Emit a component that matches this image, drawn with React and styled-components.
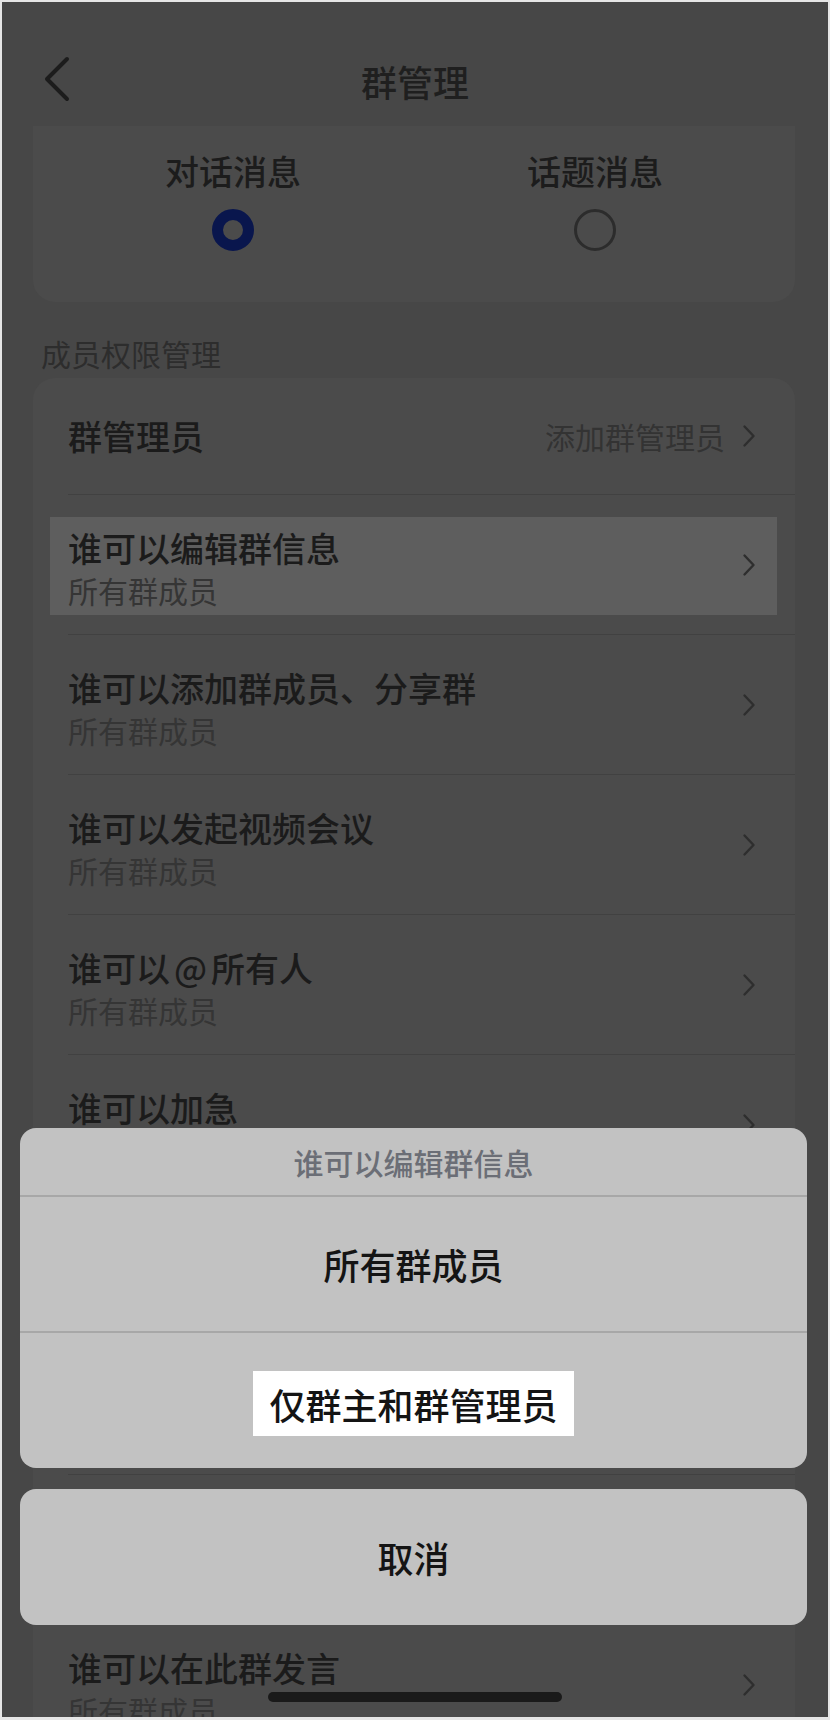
import React from 'react';
import styled, { createGlobalStyle } from 'styled-components';

const GlobalStyle = createGlobalStyle`
  html, body { margin: 0; padding: 0; }
  body {
    font-family: "Noto Sans CJK SC", "Noto Sans", sans-serif;
    background: #e6e6e6;
  }
  * { box-sizing: border-box; }
`;

const Screen = styled.div`
  position: relative;
  width: 830px;
  height: 1720px;
  overflow: hidden;
  border: 2px solid #e6e6e6;
  border-bottom-width: 3px;
  background: #474747;
`;

const Header = styled.div`
  display: grid;
  grid-template-columns: 1fr auto 1fr;
  align-items: center;
  height: 124px;
  padding-top: 34px;
`;

const BackBtn = styled.div`
  display: flex;
  align-items: center;
  padding-left: 42px;
  height: 46px;
  margin-top: -4px;
`;

const Title = styled.div`
  font-size: 36px;
  line-height: 44px;
  font-weight: 500;
  color: #1f1f1f;
`;

const ModeCard = styled.div`
  display: grid;
  grid-template-columns: 1fr 1fr;
  margin: 0 33px 0 31px;
  padding: 28px 19px 0;
  height: 176px;
  background: #4b4b4b;
  border-radius: 0 0 22px 22px;
`;

const ModeItem = styled.div`
  display: flex;
  flex-direction: column;
  align-items: center;
  gap: 21px;
`;

const ModeLabel = styled.div`
  font-size: 34px;
  line-height: 34px;
  font-weight: 500;
  color: #1c1c1c;
`;

const Radio = styled.div`
  width: 42px;
  height: 42px;
  border-radius: 50%;
  border: ${p => (p.$on ? '11px solid #09164d' : '3px solid #2c2c2c')};
`;

const SectionLabel = styled.div`
  margin: 34px 0 8px;
  padding-left: 39px;
  font-size: 30px;
  line-height: 34px;
  color: #2d2d2d;
`;

const Card = styled.div`
  margin: 0 33px 0 31px;
  background: #4b4b4b;
  border-radius: 22px;
`;

const Row = styled.div`
  position: relative;
  display: flex;
  align-items: ${p => (p.$single ? 'center' : 'flex-start')};
  height: ${p => (p.$single ? '116px' : '139px')};
  padding: ${p => (p.$single ? '0 39px 0 35px' : '32px 39px 0 35px')};

  &::before {
    content: '';
    display: ${p => (p.$active ? 'block' : 'none')};
    position: absolute;
    left: 17px;
    right: 18px;
    top: 22px;
    bottom: 19px;
    background: #5e5e5e;
  }
`;

const RowText = styled.div`
  position: relative;
  flex: 1;
  display: flex;
  flex-direction: column;
`;

const RowTitle = styled.div`
  font-size: 34px;
  line-height: 42px;
  font-weight: 500;
  color: #1b1b1b;
  white-space: nowrap;
`;

const At = styled.span`
  margin: 0 4px;
`;

const RowSub = styled.div`
  font-size: 30px;
  line-height: 42px;
  color: #353535;
`;

const RowRight = styled.div`
  position: relative;
  display: flex;
  align-items: center;
  gap: 17px;
  align-self: center;
  margin-top: ${p => (p.$offset ? '-32px' : '0')};
  font-size: 30px;
  color: #333333;
`;

const Divider = styled.div`
  height: 1px;
  margin-left: 35px;
  background: #414141;
`;

const Layer = styled.div`
  position: absolute;
  left: 18px;
  right: 21px;
  top: 1126px;
  display: flex;
  flex-direction: column;
  gap: 21px;
`;

const Sheet = styled.div`
  background: #c2c2c2;
  border-radius: 16px;
  overflow: hidden;
`;

const SheetTitle = styled.div`
  display: flex;
  align-items: center;
  justify-content: center;
  height: 69px;
  font-size: 30px;
  font-weight: 500;
  color: #6b6e76;
  border-bottom: 2px solid #a7a7a7;
`;

const SheetOption = styled.div`
  display: flex;
  align-items: center;
  justify-content: center;
  height: ${p => (p.$last ? '135px' : '136px')};
  border-bottom: ${p => (p.$last ? 'none' : '2px solid #a7a7a7')};
  font-size: 36px;
  font-weight: 500;
  color: #141414;
`;

const Mark = styled.span`
  display: inline-flex;
  align-items: center;
  height: 65px;
  padding: 0 16px;
  margin-top: 6px;
  background: #ffffff;
`;

const Cancel = styled.div`
  display: flex;
  align-items: center;
  justify-content: center;
  height: 136px;
  background: #c2c2c2;
  border-radius: 16px;
  font-size: 36px;
  font-weight: 500;
  color: #141414;
`;

const HomeBar = styled.div`
  position: absolute;
  left: 266px;
  top: 1690px;
  width: 294px;
  height: 10px;
  border-radius: 5px;
  background: #1a1a1a;
`;

const Chevron = () => (
  <svg width="14" height="24" viewBox="0 0 14 24">
    <path d="M2.5 2.5 L11.5 12 L2.5 21.5" fill="none" stroke="#2e2e2e" strokeWidth="2.4" strokeLinecap="round" strokeLinejoin="round" />
  </svg>
);

const rows = [
  { title: '谁可以编辑群信息', sub: '所有群成员', active: true },
  { title: '谁可以添加群成员、分享群', sub: '所有群成员' },
  { title: '谁可以发起视频会议', sub: '所有群成员' },
  { title: <>谁可以<At>@</At>所有人</>, sub: '所有群成员' },
  { title: '谁可以加急', sub: '所有群成员' },
  { title: '谁可以置顶消息', sub: '所有群成员' },
  { title: '谁可以发布群公告', sub: '仅群主和群管理员' },
  { title: '谁可以修改群名称', sub: '所有群成员' },
  { title: '谁可以在此群发言', sub: '所有群成员' },
];

function App() {
  return (
    <>
      <GlobalStyle />
      <Screen>
        <Header>
          <BackBtn>
            <svg width="26" height="46" viewBox="0 0 26 46">
              <path d="M23 3 L3 23 L23 43" fill="none" stroke="#1c1c1c" strokeWidth="4" strokeLinecap="round" strokeLinejoin="round" />
            </svg>
          </BackBtn>
          <Title>群管理</Title>
          <div />
        </Header>

        <ModeCard>
          <ModeItem>
            <ModeLabel>对话消息</ModeLabel>
            <Radio $on />
          </ModeItem>
          <ModeItem>
            <ModeLabel>话题消息</ModeLabel>
            <Radio />
          </ModeItem>
        </ModeCard>

        <SectionLabel>成员权限管理</SectionLabel>

        <Card>
          <Row $single>
            <RowText>
              <RowTitle>群管理员</RowTitle>
            </RowText>
            <RowRight>
              添加群管理员
              <Chevron />
            </RowRight>
          </Row>
          {rows.map((r, i) => (
            <React.Fragment key={i}>
              <Divider />
              <Row $active={r.active}>
                <RowText>
                  <RowTitle>{r.title}</RowTitle>
                  <RowSub>{r.sub}</RowSub>
                </RowText>
                <RowRight $offset>
                  <Chevron />
                </RowRight>
              </Row>
            </React.Fragment>
          ))}
        </Card>

        <Layer>
          <Sheet>
            <SheetTitle>谁可以编辑群信息</SheetTitle>
            <SheetOption>所有群成员</SheetOption>
            <SheetOption $last>
              <Mark>仅群主和群管理员</Mark>
            </SheetOption>
          </Sheet>
          <Cancel>取消</Cancel>
        </Layer>
        <HomeBar />
      </Screen>
    </>
  );
}

export default App;
